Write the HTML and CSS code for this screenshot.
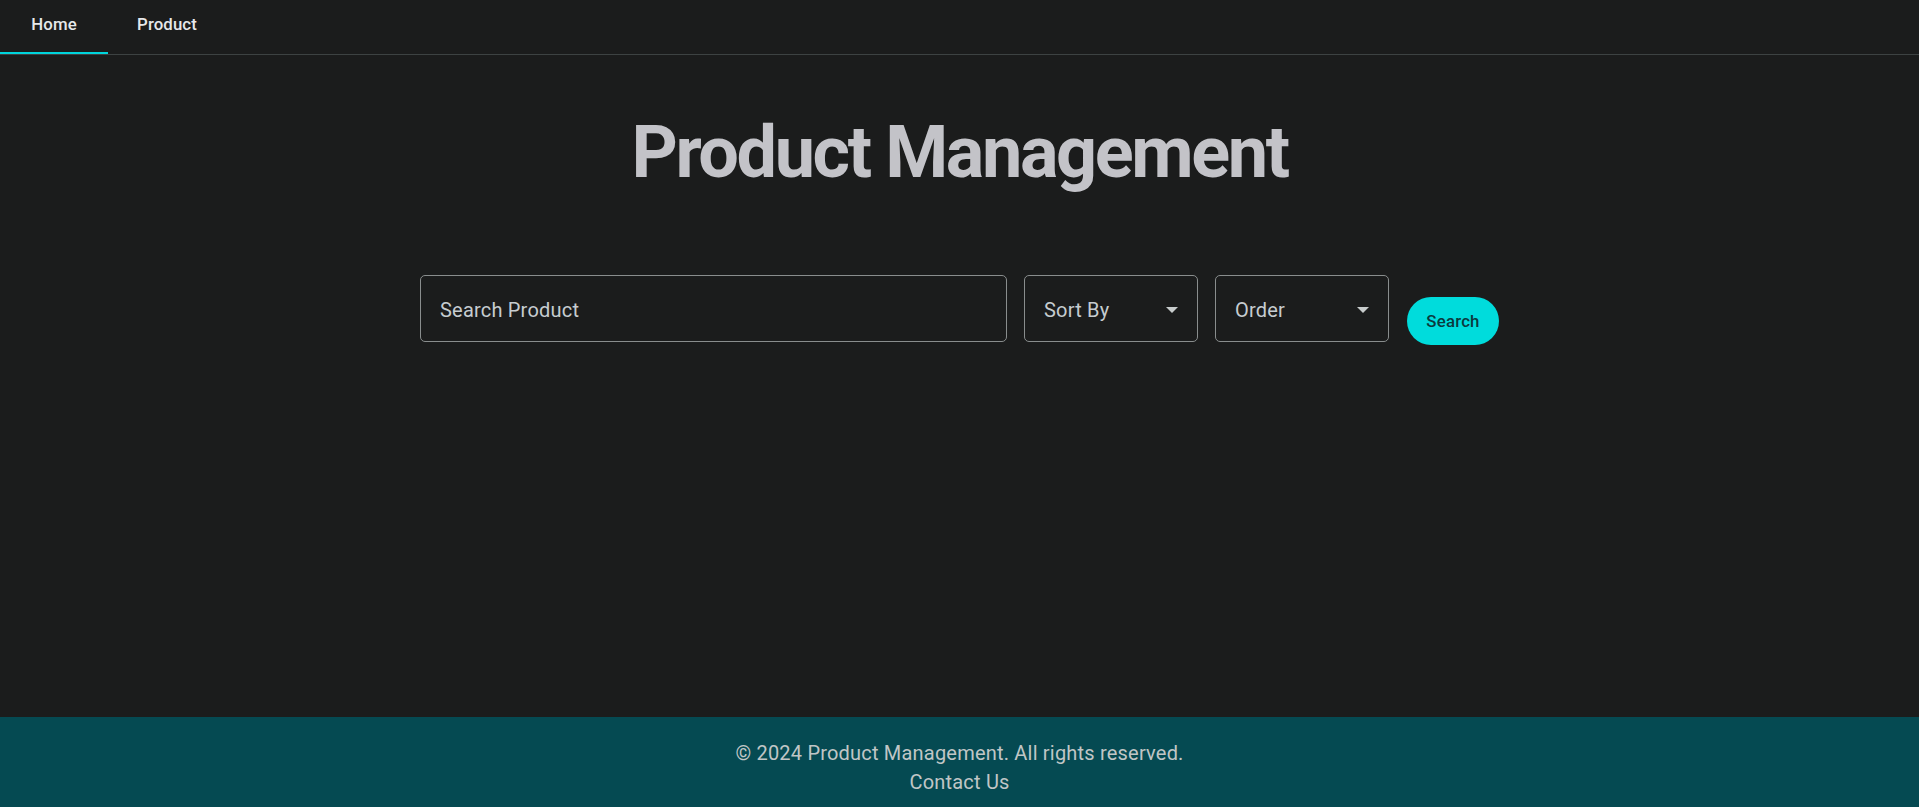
FILE: index.html
```html
<!DOCTYPE html>
<html lang="en">
<head>
<meta charset="utf-8">
<title>Product Management</title>
<link rel="stylesheet" href="styles.css">
</head>
<body>
<div class="page">
  <nav class="nav">
    <div class="tab tab-home active">Home</div>
    <div class="tab tab-product">Product</div>
  </nav>
  <main class="main">
    <h1 class="title">Product Management</h1>
    <div class="toolbar">
      <div class="field field-search"><span class="field-label">Search Product</span></div>
      <div class="field field-select"><span class="field-label">Sort By</span><svg class="caret" width="12" height="6" viewBox="0 0 12 6"><path d="M0 0h12L6 6z" fill="#c8cccc"/></svg></div>
      <div class="field field-select"><span class="field-label">Order</span><svg class="caret" width="12" height="6" viewBox="0 0 12 6"><path d="M0 0h12L6 6z" fill="#c8cccc"/></svg></div>
      <button class="btn-search">Search</button>
    </div>
  </main>
  <footer class="footer">
    <div class="footer-line">© 2024 Product Management. All rights reserved.</div>
    <div class="footer-line">Contact Us</div>
  </footer>
</div>
</body>
</html>
```

FILE: styles.css
```css
html, body {
  margin: 0;
  padding: 0;
  height: 100%;
}
body {
  background: #1b1c1c;
  font-family: Roboto, "Liberation Sans", sans-serif;
  color: #c4c6c8;
}
.page {
  min-height: 100vh;
  display: flex;
  flex-direction: column;
}
.nav {
  display: flex;
  height: 54px;
  border-bottom: 1px solid #3d4242;
}
.tab {
  height: 54px;
  box-sizing: border-box;
  padding-bottom: 6px;
  display: flex;
  align-items: center;
  justify-content: center;
  font-size: 16.8px;
  font-weight: 500;
  color: #e6e8ea;
  letter-spacing: 0.1px;
}
.tab-home { width: 108px; }
.tab-product { width: 118px; }
.tab.active {
  border-bottom: 2px solid #00d4dc;
  padding-bottom: 4px;
}
.main {
  flex: 1;
  display: flex;
  flex-direction: column;
  align-items: center;
}
.title {
  margin: 55px 0 0;
  font-size: 72px;
  line-height: 86px;
  font-weight: 700;
  color: #c3c3c8;
  letter-spacing: -2.4px;
}
.toolbar {
  margin-top: 79px;
  display: flex;
  align-items: flex-start;
  gap: 17px;
}
.field {
  height: 67px;
  box-sizing: border-box;
  border: 1px solid #898d8d;
  border-radius: 5px;
  display: flex;
  align-items: center;
  padding: 2px 18px 0 19px;
  font-size: 20px;
  color: #c6ccd0;
  letter-spacing: 0.2px;
}
.field-search { width: 587px; }
.field-select {
  width: 174px;
  justify-content: space-between;
}
.field-label { display: block; }
.caret { display: block; margin-right: 1px; }
.btn-search {
  margin-top: 22px;
  margin-left: 1px;
  width: 92px;
  height: 48px;
  border: none;
  border-radius: 24px;
  background: #00dcdc;
  color: #0b3a3e;
  font-family: Roboto, "Liberation Sans", sans-serif;
  font-size: 16.8px;
  font-weight: 500;
  letter-spacing: 0.2px;
  padding: 0;
}
.footer {
  height: 90px;
  box-sizing: border-box;
  background: #054a52;
  padding-top: 22px;
  text-align: center;
  font-size: 20px;
  line-height: 29px;
  color: #c0c6c6;
  letter-spacing: 0.2px;
}
```
